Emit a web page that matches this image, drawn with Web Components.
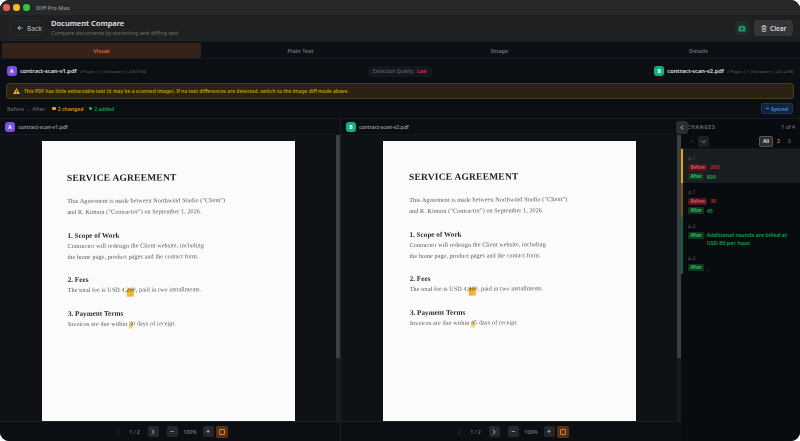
<!DOCTYPE html>
<html>
<head>
<meta charset="utf-8">
<title>Diff Pro Max</title>
<style>
html, body { margin: 0; height: 100%; background: #fff; overflow: hidden; }
body { font-family: "Noto Sans", "Open Sans", sans-serif; color: #e5e7eb; }
</style>
</head>
<body>
<diff-app></diff-app>

<template id="t-app">
  <style>
    :host { display: flex; flex-direction: column; width: 800px; height: 441px; background: #0b0f14; overflow: hidden; border-radius: 9px; }
    .panes { flex: 1; display: flex; min-height: 0; border-top: 1px solid #171b21; }
  </style>
  <title-bar></title-bar>
  <app-header></app-header>
  <tab-bar></tab-bar>
  <file-bar></file-bar>
  <warn-banner>This PDF has little extractable text (it may be a scanned image). If no text differences are detected, switch to the image diff mode above.</warn-banner>
  <diff-toolbar></diff-toolbar>
  <div class="panes">
    <doc-pane badge="A" name="contract-scan-v1.pdf" fee="200" days="3" rest="0" style="width:341px"></doc-pane>
    <doc-pane badge="B" name="contract-scan-v2.pdf" fee="800" days="4" rest="5" second style="width:340px"></doc-pane>
    <changes-panel></changes-panel>
  </div>
</template>

<template id="t-title">
  <style>
    :host { display: flex; align-items: center; height: 15px; background: #26282a; padding-left: 3.3px; flex: none; }
    i { width: 6.6px; height: 6.6px; border-radius: 50%; margin-right: 3.4px; }
    span { font-size: 5.6px; color: #8b8d90; font-weight: 600; margin-left: 3px; }
  </style>
  <i style="background:#ee5f57"></i><i style="background:#f5bd2e"></i><i style="background:#2ec840"></i>
  <span>Diff Pro Max</span>
</template>

<template id="t-header">
  <style>
    :host { display: flex; align-items: center; height: 26px; background: #1f2022; padding: 0 7px 0 10px; flex: none; border-bottom: 1px solid #15171a; }
    .back { display: flex; align-items: center; gap: 4px; height: 16px; width: 34px; box-sizing: border-box; padding-left: 6px; border: 1px solid #292b2e; border-radius: 4px; font-size: 6.5px; font-weight: 500; color: #a8aaae; }
    .title { margin-left: 7px; display: flex; flex-direction: column; }
    b { font-size: 7.5px; line-height: 11px; font-weight: 600; color: #e8e9ea; }
    small { font-size: 5.4px; line-height: 9px; color: #6c6e72; }
    .grow { flex: 1; }
    .cam { width: 14px; height: 14px; background: #26292b; border-radius: 4px; display: flex; align-items: center; justify-content: center; margin-right: 5px; }
    .clear { display: flex; align-items: center; gap: 3px; height: 16px; width: 39px; box-sizing: border-box; padding-left: 7px; background: #333537; border-radius: 4px; font-size: 6.5px; font-weight: 600; color: #d8d9da; }
  </style>
  <div class="back"><svg width="6" height="6" viewBox="0 0 10 10" fill="none" stroke="#c0c2c5" stroke-width="1.5"><path d="M9 5H1.5M5 1.5 1.5 5 5 8.5"/></svg>Back</div>
  <div class="title"><b>Document Compare</b><small>Compare documents by extracting and diffing text</small></div>
  <div class="grow"></div>
  <div class="cam"><svg width="8" height="7" viewBox="0 0 16 14"><path fill="#12a070" d="M1 3h3.5L6 1h4l1.5 2H15v10H1z"/><circle cx="8" cy="7.5" r="2.6" fill="#0c3a2c"/></svg></div>
  <div class="clear"><svg width="6" height="7" viewBox="0 0 12 14" fill="none" stroke="#d0d2d4" stroke-width="1.4"><path d="M1 3h10M4 3V1h4v2M2.5 3v10h7V3M5 5.5v5M7 5.5v5"/></svg>Clear</div>
</template>

<template id="t-tabs">
  <style>
    :host { display: grid; grid-template-columns: repeat(4, 1fr); height: 15px; padding: 1px 2px 0; background: #0c1016; flex: none; border-bottom: 1px solid #171b21; }
    div { display: flex; align-items: center; justify-content: center; font-size: 5.6px; font-weight: 600; color: #6f7276; height: 15px; }
    .on { background: #35231a; color: #d9682a; border-radius: 1px; }
  </style>
  <div class="on">Visual</div><div>Plain Text</div><div>Image</div><div>Details</div>
</template>

<template id="t-file">
  <style>
    :host { display: flex; align-items: center; justify-content: space-between; height: 24px; padding: 0 7px 0 6.5px; background: #0b0f14; flex: none; }
    .f { display: flex; align-items: center; width: 260px; }
    .r { justify-content: flex-end; }
    .b { width: 10.5px; height: 10.5px; border-radius: 3px; display: flex; align-items: center; justify-content: center; font-size: 5px; font-weight: 700; color: #fff; }
    b { font-size: 5.7px; font-weight: 600; color: #e2e3e5; margin-left: 3px; }
    small { font-size: 4.2px; color: #5e6167; margin-left: 3px; }
    .q { display: flex; align-items: center; height: 11px; padding: 0 5px; border-radius: 3px; background: #14181e; font-size: 4.8px; color: #6b6e73; gap: 3px; }
    .q em { font-style: normal; font-weight: 700; color: #c22a36; }
  </style>
  <div class="f"><span class="b" style="background:#7c4fe6">A</span><b>contract-scan-v1.pdf</b><small>2 Pages | 1 Characters | 226.9 KB</small></div>
  <div class="q">Extraction Quality: <em>Low</em></div>
  <div class="f r"><span class="b" style="background:#12b184">B</span><b>contract-scan-v2.pdf</b><small>2 Pages | 1 Characters | 241.4 KB</small></div>
</template>

<template id="t-warn">
  <style>
    :host { display: flex; align-items: center; gap: 4px; height: 16px; margin: 0 6px; padding: 0 6px; box-sizing: border-box; background: #2a2213; border: 1px solid #4d3c18; border-radius: 3px; font-size: 4.92px; font-weight: 600; color: #c99a12; flex: none; white-space: nowrap; }
  </style>
  <svg width="7" height="6" viewBox="0 0 14 12"><path fill="#e3ac1c" d="M7 0 14 12H0z"/><path fill="#2a2213" d="M6.3 4h1.4v4H6.3zM6.3 9h1.4v1.4H6.3z"/></svg>
  <slot></slot>
</template>

<template id="t-toolbar">
  <style>
    :host { display: flex; align-items: center; height: 19px; padding: 0 7px; font-size: 5.4px; font-weight: 500; color: #63666b; flex: none; }
    .c { display: flex; align-items: center; gap: 2px; font-weight: 600; font-size: 5.1px; margin-left: 7px; }
    .dot { margin: 0 2px; color: #3a3d42; }
    .c i { width: 3.5px; height: 3.5px; border-radius: 1px; }
    .grow { flex: 1; }
    .sync { height: 11px; width: 32px; display: flex; align-items: center; justify-content: center; gap: 2px; background: #10233d; border: 1px solid #17355c; box-sizing: border-box; border-radius: 2px; color: #4d8fe0; font-weight: 600; font-size: 5px; }
    .sync u { width: 3px; height: 1px; background: #4d8fe0; }
  </style>
  <span>Before → After</span>
  <span class="c" style="color:#d99a0c"><i style="background:#e8a60f"></i>2 changed</span>
  <span class="dot">·</span>
  <span class="c" style="color:#13a347;margin-left:0"><i style="background:#16b34f"></i>2 added</span>
  <span class="grow"></span>
  <span class="sync"><u></u>Synced</span>
</template>

<template id="t-pane">
  <style>
    :host { display: flex; flex-direction: column; min-height: 0; box-sizing: border-box; position: relative; border-right: 1px solid #1b1e23; }
    :host([second]) { border-right: 0; }
    .head { display: flex; align-items: center; gap: 3px; height: 15px; padding-left: 5px; font-size: 5.1px; font-weight: 500; color: #a6a8ac; flex: none; border-bottom: 1px solid #14181d; }
    .b { width: 10px; height: 10px; border-radius: 3px; display: flex; align-items: center; justify-content: center; font-size: 5px; font-weight: 700; color: #fff; }
    .view { flex: 1; min-height: 0; display: flex; justify-content: center; padding: 6px 3px 0 0; background: #0e1116; overflow: hidden; }
    .sb { position: absolute; right: 0; top: 16px; bottom: 20px; width: 4px; background: #181b20; }
    .sb i { display: block; height: 78%; background: #3b3f45; }
    .foot { height: 20px; box-sizing: border-box; border-top: 1px solid #1c1f24; display: flex; align-items: center; justify-content: center; font-size: 5.2px; font-weight: 500; color: #7d8085; background: #0b0e13; flex: none; }
    .btn { width: 11px; height: 11px; border-radius: 2px; display: flex; align-items: center; justify-content: center; background: #24272b; color: #d0d2d5; font-size: 7px; line-height: 1; }
    .ghost { background: none; color: #3f4247; }
    .fit { background: #55331a; width: 12px; height: 12px; margin-left: 2px; }
    .fit i { width: 4px; height: 4px; border: 1px solid #e27a25; border-radius: 1px; }
    .n { width: 25px; text-align: center; }
    .pg { width: 22px; text-align: center; margin-right: 2px; }
    .mr { margin-left: 8px; }
  </style>
  <div class="head"><span class="b"></span><span class="nm"></span></div>
  <div class="view"><scan-page></scan-page></div>
  <div class="sb"><i></i></div>
  <div class="foot">
    <span class="btn ghost"><svg width="4" height="6" viewBox="0 0 6 10" fill="none" stroke="currentColor" stroke-width="1.4"><path d="M5 1 1 5l4 4"/></svg></span>
    <span class="pg">1 / 2</span>
    <span class="btn"><svg width="4" height="6" viewBox="0 0 6 10" fill="none" stroke="currentColor" stroke-width="1.4"><path d="m1 1 4 4-4 4"/></svg></span>
    <span class="btn mr">−</span>
    <span class="n">100%</span>
    <span class="btn">+</span>
    <span class="btn fit"><i></i></span>
  </div>
</template>

<template id="t-page">
  <style>
    :host { display: block; width: 253px; height: 280px; flex: none; background: #fbfbfb; box-sizing: border-box; padding: 29.5px 0 0 25px; font-family: "Liberation Serif", serif; color: #55575a; overflow: hidden; }
    :host([second]) { padding-left: 26px; padding-top: 29px; }
    .in { transform: rotate(-0.35deg); transform-origin: 0 0; width: 215px; }
    h1 { font-size: 9.5px; line-height: 14px; margin: 0 0 11px; color: #202123; font-weight: 700; letter-spacing: .2px; }
    p { font-size: 6.13px; line-height: 11px; margin: 0; white-space: nowrap; letter-spacing: .09px; }
    h2 { font-size: 7.2px; line-height: 10px; margin: 12.5px 0 0; color: #2c2d2f; font-weight: 700; }
    mark { position: relative; background: none; color: inherit; }
    mark::after { content: ""; position: absolute; top: 2px; height: var(--h); left: 0; width: var(--w); background: var(--c); mix-blend-mode: multiply; }
  </style>
  <div class="in">
    <h1>SERVICE AGREEMENT</h1>
    <p>This Agreement is made between Northwind Studio ("Client")</p>
    <p>and R. Kimura ("Contractor") on September 1, 2026.</p>
    <h2>1. Scope of Work</h2>
    <p>Contractor will redesign the Client website, including</p>
    <p>the home page, product pages and the contact form.</p>
    <h2>2. Fees</h2>
    <p>The total fee is USD 4,<mark style="--w:7.7px;--h:7.7px;--c:#f2b52e"><span class="fv"></span></mark>, paid in two installments.</p>
    <h2>3. Payment Terms</h2>
    <p>Invoices are due within <mark style="--w:4px;--h:6.5px;--c:#f7d877"><span class="dv"></span></mark><span class="rest"></span> days of receipt.</p>
  </div>
</template>

<template id="t-changes">
  <style>
    :host { flex: 1; display: flex; flex-direction: column; min-width: 0; position: relative; background: #080b10; }
    .toggle { position: absolute; left: -5px; top: 2px; width: 11.5px; height: 13px; border-radius: 3px; background: #2a2d31; display: flex; align-items: center; justify-content: center; z-index: 2; }
    .head { display: flex; justify-content: space-between; align-items: center; height: 15px; padding: 0 5px 0 6px; font-size: 5.2px; font-weight: 600; letter-spacing: .6px; color: #777a7f; flex: none; }
    .head span + span { letter-spacing: 0; font-weight: 500; }
    .tools { display: flex; align-items: center; height: 15px; padding: 0 5px 0 5px; flex: none; border-bottom: 1px solid #15191e; box-sizing: border-box; }
    .nav { width: 11px; height: 11px; display: flex; align-items: center; justify-content: center; border-radius: 2px; margin-right: 1px; color: #3f4247; }
    .nav.on { background: #1d2025; color: #b5b7ba; }
    .grow { flex: 1; }
    .chip { font-size: 5px; font-weight: 600; width: 11px; text-align: center; height: 11px; line-height: 11px; }
    .chip.all { width: 14px; background: #2a2d31; box-sizing: border-box; line-height: 9px; border: 1px solid #55585c; border-radius: 2px; color: #e4e5e6; }
    .list { flex: 1; display: flex; flex-direction: column; }
  </style>
  <div class="toggle"><svg width="4" height="5" viewBox="0 0 6 10" fill="none" stroke="#d5d6d8" stroke-width="1.8"><path d="M5 1 1 5l4 4"/></svg></div>
  <div class="head"><span>CHANGES</span><span>1 of 4</span></div>
  <div class="tools">
    <span class="nav"><svg width="5" height="3" viewBox="0 0 10 6" fill="none" stroke="currentColor" stroke-width="1.4"><path d="M1 5l4-4 4 4"/></svg></span>
    <span class="nav on"><svg width="5" height="3" viewBox="0 0 10 6" fill="none" stroke="currentColor" stroke-width="1.4"><path d="M1 1l4 4 4-4"/></svg></span>
    <span class="grow"></span>
    <span class="chip all">All</span>
    <span class="chip" style="color:#c98e0e">2</span>
    <span class="chip" style="color:#14a048">2</span>
  </div>
  <div class="list">
    <change-item page="p.1" selected bar="#e0a512"><diff-line kind="before">200</diff-line><diff-line kind="after">800</diff-line></change-item>
    <change-item page="p.1" bar="#7a5413"><diff-line kind="before">30</diff-line><diff-line kind="after">45</diff-line></change-item>
    <change-item page="p.2" bar="#14603a"><diff-line kind="after">Additional rounds are billed at USD 60 per hour.</diff-line></change-item>
    <change-item page="p.2" bar="#14603a"><diff-line kind="after">_</diff-line></change-item>
  </div>
</template>

<template id="t-item">
  <style>
    :host { display: block; padding: 4.5px 4px 1px 5px; border-left: 2px solid var(--bar, transparent); }
    :host([selected]) { background: #191c20; }
    .p { font-size: 5px; line-height: 8px; color: #55585c; margin-bottom: 1.5px; }
  </style>
  <div class="p"></div>
  <slot></slot>
</template>

<template id="t-line">
  <style>
    :host { display: flex; align-items: flex-start; gap: 2.5px; margin-bottom: 1.5px; font-size: 5.45px; line-height: 8px; font-weight: 600; }
    :host([kind=before]) { color: #c22f35; }
    :host([kind=after]) { color: #15a34a; }
    .t { flex: none; font-size: 4.4px; font-weight: 700; line-height: 7px; height: 7px; padding: 0 2.5px; border-radius: 1.5px; margin-top: .5px; }
    :host([kind=before]) .t { background: #4b1a1e; color: #e0555a; }
    :host([kind=after]) .t { background: #0f3a20; color: #2bc768; }
  </style>
  <span class="t"></span><span><slot></slot></span>
</template>

<script>
function fromTemplate(el, id) {
  const root = el.attachShadow({ mode: 'open' });
  root.appendChild(document.getElementById(id).content.cloneNode(true));
  return root;
}

function plain(tag, id) {
  customElements.define(tag, class extends HTMLElement {
    constructor() {
      super();
      fromTemplate(this, id);
    }
  });
}

plain('diff-app', 't-app');
plain('title-bar', 't-title');
plain('app-header', 't-header');
plain('tab-bar', 't-tabs');
plain('file-bar', 't-file');
plain('warn-banner', 't-warn');
plain('diff-toolbar', 't-toolbar');
plain('scan-page', 't-page');
plain('changes-panel', 't-changes');

class DocPane extends HTMLElement {
  constructor() {
    super();
    fromTemplate(this, 't-pane');
  }
  connectedCallback() {
    const root = this.shadowRoot;
    const b = root.querySelector('.b');
    b.textContent = this.getAttribute('badge');
    b.style.background = this.getAttribute('badge') === 'A' ? '#7c4fe6' : '#12b184';
    root.querySelector('.nm').textContent = this.getAttribute('name');
    const sp = root.querySelector('scan-page');
    if (this.hasAttribute('second')) sp.setAttribute('second', '');
    const page = sp.shadowRoot;
    page.querySelector('.fv').textContent = this.getAttribute('fee');
    page.querySelector('.dv').textContent = this.getAttribute('days');
    page.querySelector('.rest').textContent = this.getAttribute('rest');
  }
}
customElements.define('doc-pane', DocPane);

class ChangeItem extends HTMLElement {
  constructor() {
    super();
    fromTemplate(this, 't-item');
  }
  connectedCallback() {
    this.shadowRoot.querySelector('.p').textContent = this.getAttribute('page');
    this.style.setProperty('--bar', this.getAttribute('bar'));
  }
}
customElements.define('change-item', ChangeItem);

class DiffLine extends HTMLElement {
  constructor() {
    super();
    fromTemplate(this, 't-line');
  }
  connectedCallback() {
    this.shadowRoot.querySelector('.t').textContent = this.getAttribute('kind') === 'before' ? 'Before' : 'After';
  }
}
customElements.define('diff-line', DiffLine);
</script>
</body>
</html>
